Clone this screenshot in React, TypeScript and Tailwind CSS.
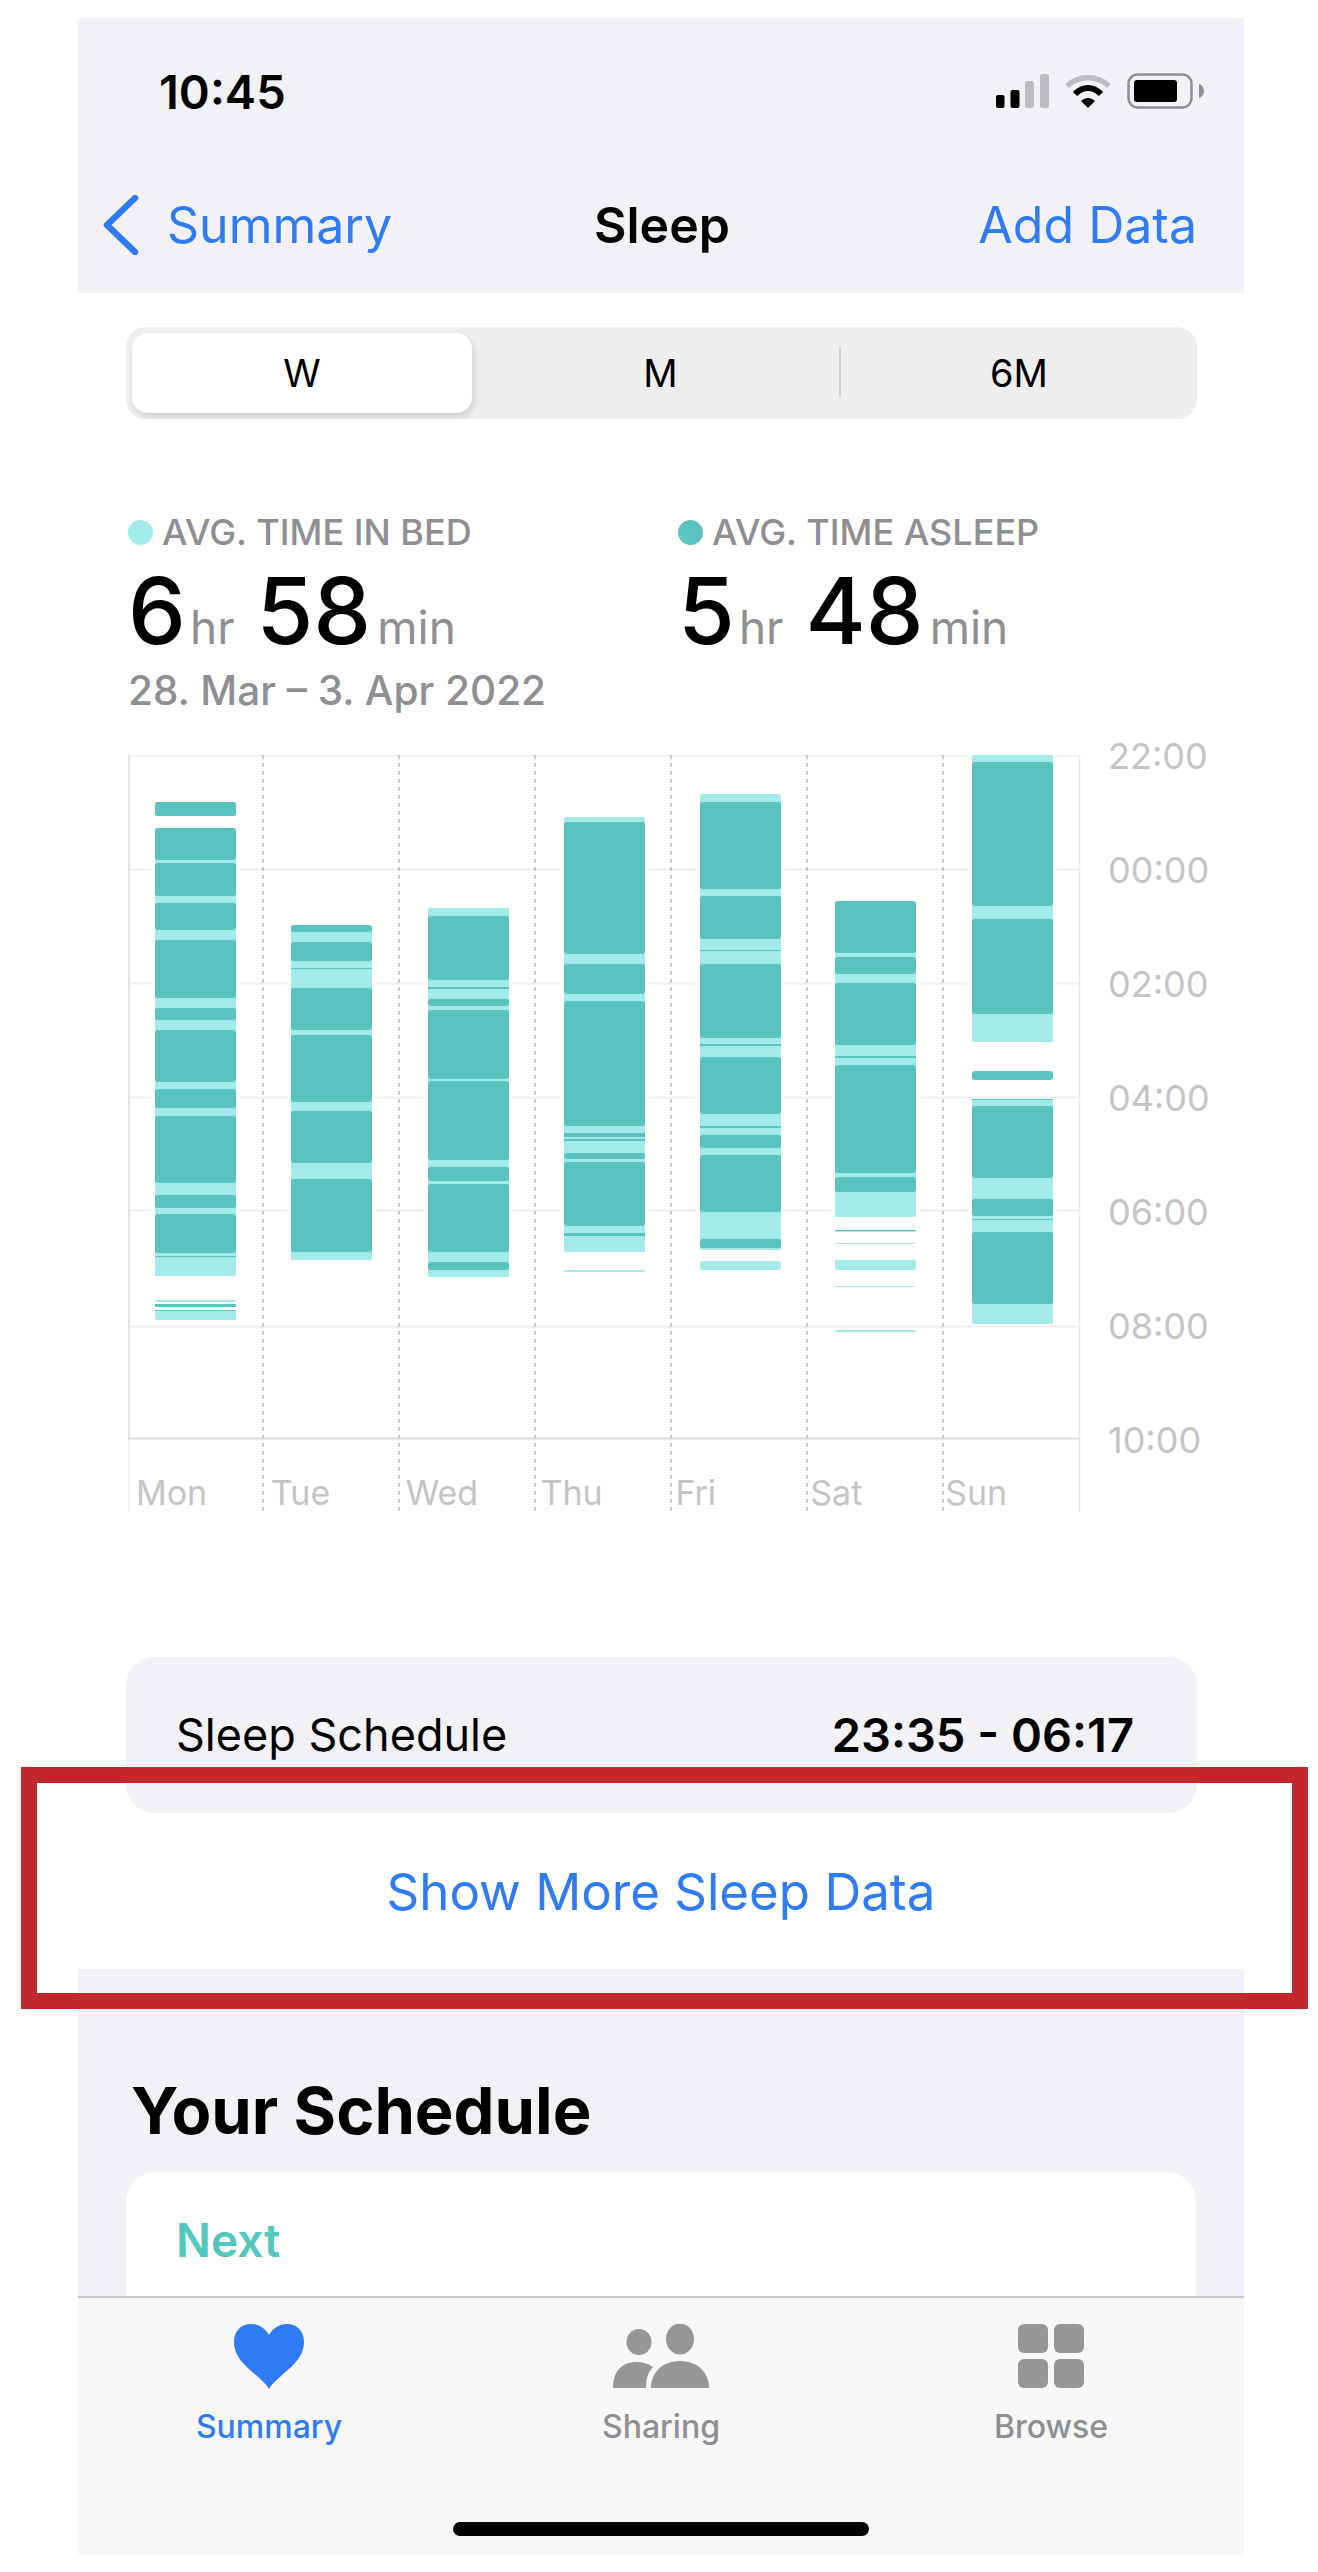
const dark = "#5ac3be";
const light = "#a3ebe9";

// chart-space segments, y values are px from the top of the plot
type Day = { name: string; x: number; light: number[][]; dark: number[][] };

const days: Day[] = [
  {
    name: "Mon",
    x: 27,
    light: [[47, 61], [73, 521], [545, 547], [555, 565]],
    dark: [[47, 61], [73, 105], [108, 141], [148, 175], [185, 243], [253, 265], [275, 327], [334, 353], [361, 428], [440, 453], [459, 498], [501, 502], [549, 552], [555, 556]],
  },
  {
    name: "Tue",
    x: 163,
    light: [[170, 505]],
    dark: [[170, 177], [187, 206], [213, 214], [233, 275], [280, 347], [356, 408], [424, 497]],
  },
  {
    name: "Wed",
    x: 300,
    light: [[153, 522]],
    dark: [[161, 225], [232, 234], [244, 251], [255, 324], [326, 405], [412, 426], [429, 497], [507, 515]],
  },
  {
    name: "Thu",
    x: 436,
    light: [[62, 497], [515, 517]],
    dark: [[67, 199], [209, 239], [246, 371], [378, 382], [384, 386], [398, 404], [407, 471], [478, 481]],
  },
  {
    name: "Fri",
    x: 572,
    light: [[39, 495], [506, 515]],
    dark: [[47, 134], [141, 184], [195, 196], [209, 283], [289, 291], [302, 359], [371, 373], [380, 393], [400, 457], [484, 493]],
  },
  {
    name: "Sat",
    x: 707,
    light: [[146, 462], [475, 477], [488, 489], [505, 515], [531, 532], [575, 577]],
    dark: [[146, 198], [202, 219], [228, 290], [301, 303], [310, 418], [422, 437], [475, 476]],
  },
  {
    name: "Sun",
    x: 844,
    light: [[0, 287], [344, 569]],
    dark: [[7, 151], [164, 259], [316, 325], [344, 345], [351, 423], [444, 461], [464, 465], [477, 549]],
  },
];

const gridLines = [0, 114, 228, 342, 455, 571, 683];
const dayLines = [135, 271, 407, 543, 679, 815];
const times = ["22:00", "00:00", "02:00", "04:00", "06:00", "08:00", "10:00"];

function SleepChart() {
  return (
    <svg width="953" height="757" viewBox="0 0 953 757" className="block shrink-0">
      {gridLines.map((y, i) => (
        <line key={y} x1="0" x2="952" y1={y + 0.5} y2={y + 0.5} stroke={i === 6 ? "#dedee0" : "#efeff1"} strokeWidth="2" />
      ))}
      <line x1="1" x2="1" y1="0" y2="683" stroke="#e4e4e6" strokeWidth="2" />
      <line x1="1" x2="1" y1="683" y2="757" stroke="#e9e9eb" strokeWidth="1" />
      <line x1="951.5" x2="951.5" y1="0" y2="757" stroke="#e9e9eb" strokeWidth="1.5" />
      {dayLines.map((x) => (
        <line key={x} x1={x} x2={x} y1="0" y2="757" stroke="#c9c9cc" strokeWidth="2" strokeDasharray="4 4" />
      ))}
      {days.map((d) => (
        <g key={d.name}>
          {/* grid lines stop a few px short of the bars */}
          {d.light.map(([a, b]) => (
            <rect key={a} x={d.x - 4} y={a} width="89" height={b - a} fill="#fff" />
          ))}
          {d.light.map(([a, b]) => (
            <rect key={a} x={d.x} y={a} width="81" height={b - a} rx="2" fill={light} />
          ))}
          {d.dark.map(([a, b]) => (
            <rect key={a} x={d.x} y={a} width="81" height={b - a} rx={b - a > 4 ? 3 : 0} fill={dark} />
          ))}
        </g>
      ))}
    </svg>
  );
}

function Stat({ dot, label, h, m, className }: { dot: string; label: string; h: string; m: string; className: string }) {
  return (
    <div className={className}>
      <div className="flex items-center gap-[9px] h-[40px]">
        <span className="w-[25px] h-[25px] rounded-full" style={{ background: dot }} />
        <span className="text-[36px] font-medium text-[#8e8e93] whitespace-nowrap">{label}</span>
      </div>
      <div className="flex items-baseline h-[104px] mt-[7px] leading-[104px] whitespace-nowrap">
        <span className="text-[92px] font-medium text-black">{h}</span>
        <span className="text-[46px] text-[#8e8e93] ml-[4px] mr-[22px]">hr</span>
        <span className="text-[92px] font-medium text-black">{m}</span>
        <span className="text-[46px] text-[#8e8e93] ml-[6px]">min</span>
      </div>
    </div>
  );
}

function StatusIcons() {
  return (
    <div className="flex items-center gap-[16px]">
      <svg width="53" height="34" viewBox="0 0 53 34">
        <rect x="0" y="21" width="8.5" height="13" rx="2" fill="#000" />
        <rect x="14.5" y="16" width="9" height="18" rx="2" fill="#000" />
        <rect x="29" y="7" width="9" height="27" rx="2.5" fill="#bdbdbf" />
        <rect x="44" y="0" width="9" height="34" rx="2.5" fill="#bdbdbf" />
      </svg>
      <svg width="46" height="34" viewBox="0 0 46 34" fill="none">
        <path d="M2 12 C14 1 32 1 44 12" stroke="#bdbdbf" strokeWidth="5.5" />
        <path d="M10 20 C18 12 28 12 36 20" stroke="#000" strokeWidth="6" />
        <path d="M16 27 C20 23 26 23 30 27 L23 34 Z" fill="#000" />
      </svg>
      <svg width="78" height="36" viewBox="0 0 78 36">
        <rect x="1.5" y="1.5" width="63" height="33" rx="9" fill="none" stroke="#8e8e93" strokeWidth="2.5" />
        <rect x="7" y="7" width="43" height="22" rx="3" fill="#000" />
        <path d="M72 11 C75 12 77 15 77 18 C77 21 75 24 72 25 Z" fill="#8e8e93" />
      </svg>
    </div>
  );
}

function TabItem({ label, active, icon }: { label: string; active?: boolean; icon: React.ReactNode }) {
  return (
    <div className="flex flex-col items-center w-[160px]">
      <div className="h-[64px] flex items-center justify-center">{icon}</div>
      <span className={`mt-[21px] text-[32px] leading-[36px] font-medium ${active ? "text-[#2f7bf6]" : "text-[#8e8e93]"}`}>{label}</span>
    </div>
  );
}

export default function App() {
  return (
    <div className="relative w-[1318px] h-[2572px] bg-white overflow-hidden font-['Inter',sans-serif]">
      <div className="ml-[78px] w-[1166px] pt-[18px]">
        <header className="h-[275px] bg-[#f1f1f6] flex flex-col">
          <div className="flex items-center justify-between h-[36px] mt-[55px] pl-[81px] pr-[39px]">
            <span className="text-[47px] font-semibold text-black leading-none">10:45</span>
            <StatusIcons />
          </div>
          <div className="relative flex items-center justify-between h-[60px] mt-[86px] pl-[25px] pr-[47px]">
            <div className="flex items-center gap-[28px]">
              <svg width="36" height="60" viewBox="0 0 36 60" fill="none">
                <path d="M32 3 L4 30 L32 57" stroke="#2f7bf6" strokeWidth="6.5" strokeLinecap="round" strokeLinejoin="round" />
              </svg>
              <span className="text-[50px] text-[#2f7bf6] leading-none">Summary</span>
            </div>
            <span className="absolute left-[516px] text-[50px] font-semibold text-black leading-none">Sleep</span>
            <span className="text-[50px] text-[#2f7bf6] leading-none">Add Data</span>
          </div>
        </header>

        <main className="bg-white h-[1676px] px-[48px] pt-[34px]">
          <div className="relative flex h-[92px] w-[1071px] rounded-[20px] bg-[#eeeeef] p-[6px] text-[38px] text-black">
            <div className="w-[340px] h-[80px] rounded-[16px] bg-white shadow-[2px_4px_6px_rgba(0,0,0,0.12)] flex items-center justify-center">W</div>
            <div className="w-[367px] pl-[10px] flex items-center justify-center">M</div>
            <div className="w-[2px] h-[48px] mt-[15px] bg-[#cfcfd2]" />
            <div className="flex-1 pl-[6px] flex items-center justify-center">6M</div>
          </div>

          <div className="flex mt-[93px] ml-[2px]">
            <Stat className="w-[550px]" dot={light} label="AVG. TIME IN BED" h="6" m="58" />
            <Stat dot={dark} label="AVG. TIME ASLEEP" h="5" m="48" className="" />
          </div>
          <div className="ml-[2px] mt-[6px] text-[40.5px] leading-[44px] font-medium text-[#8e8e93]">28. Mar – 3. Apr 2022</div>

          <div className="relative flex mt-[42px] ml-[2px]">
            <SleepChart />
            <div className="absolute left-[0px] top-[708px] w-[953px] h-[60px]">
              <div className="grid grid-cols-7 w-[952px] pl-[8px] text-[34px] leading-[60px] text-[#c4c4c6]">
                {days.map((d) => (
                  <span key={d.name}>{d.name}</span>
                ))}
              </div>
            </div>
            <div className="flex flex-col justify-between h-[720px] -mt-[17px] ml-[27px] text-[36px] leading-[36px] text-[#c4c4c6]">
              {times.map((t) => (
                <span key={t}>{t}</span>
              ))}
            </div>
          </div>

          <div className="mt-[145px] w-[1071px] h-[156px] rounded-[28px] bg-[#f1f1f6] flex items-start justify-between pl-[50px] pr-[63px] pt-[54px]">
            <span className="text-[45px] leading-[48px] text-black">Sleep Schedule</span>
            <span className="text-[47px] leading-[48px] font-semibold text-black">23:35 - 06:17</span>
          </div>
          <div className="mt-[51px] text-center text-[51px] leading-[56px] text-[#2f7bf6]">Show More Sleep Data</div>
        </main>

        <section className="bg-[#f1f1f6] h-[327px] overflow-hidden">
          <h2 className="ml-[53px] pt-[106px] text-[65px] leading-[72px] font-bold text-black">Your Schedule</h2>
          <div className="mx-[48px] mt-[25px] h-[200px] rounded-[30px] bg-white pl-[50px] pt-[44px]">
            <span className="text-[46px] leading-[48px] font-semibold text-[#51c7bd]">Next</span>
          </div>
        </section>

        <nav className="h-[259px] bg-[#f7f7f8] border-t-2 border-[#c8c8cc]">
          <div className="flex pt-[26px]">
            <div className="ml-[111px]">
              <TabItem
                label="Summary"
                active
                icon={
                  <svg width="70" height="65" viewBox="0 0 70 65">
                    <path d="M35 65 C26 50 0 40 0 18 C0 7 7 0 17 0 C25 0 31 4 35 11 C39 4 45 0 53 0 C63 0 70 7 70 18 C70 40 44 50 35 65 Z" fill="#2f7bf6" />
                  </svg>
                }
              />
            </div>
            <div className="ml-[232px]">
              <TabItem
                label="Sharing"
                icon={
                  <svg width="96" height="64" viewBox="0 0 96 64">
                    <ellipse cx="26" cy="18" rx="12.5" ry="13" fill="#969696" />
                    <ellipse cx="67" cy="15" rx="14" ry="15.5" fill="#969696" />
                    <path d="M0 64 C0 48 8 38 24 38 C29 38 34 39 40 43 C35 48 33 55 33 64 Z" fill="#969696" />
                    <path d="M38 64 C38 48 50 37 67 37 C84 37 96 48 96 64 Z" fill="#969696" />
                  </svg>
                }
              />
            </div>
            <div className="ml-[230px]">
              <TabItem
                label="Browse"
                icon={
                  <svg width="66" height="64" viewBox="0 0 66 64">
                    <rect x="0" y="0" width="30" height="29" rx="6" fill="#969696" />
                    <rect x="36" y="0" width="30" height="29" rx="6" fill="#969696" />
                    <rect x="0" y="35" width="30" height="29" rx="6" fill="#969696" />
                    <rect x="36" y="35" width="30" height="29" rx="6" fill="#969696" />
                  </svg>
                }
              />
            </div>
          </div>
          <div className="w-[416px] h-[14px] rounded-full bg-black mx-auto mt-[77px]" />
        </nav>
      </div>

      {/* red highlight drawn over the screenshot */}
      <div className="absolute left-[21px] top-[1767px] w-[1287px] h-[242px] border-[16px] border-[#c1272d]" />
    </div>
  );
}
